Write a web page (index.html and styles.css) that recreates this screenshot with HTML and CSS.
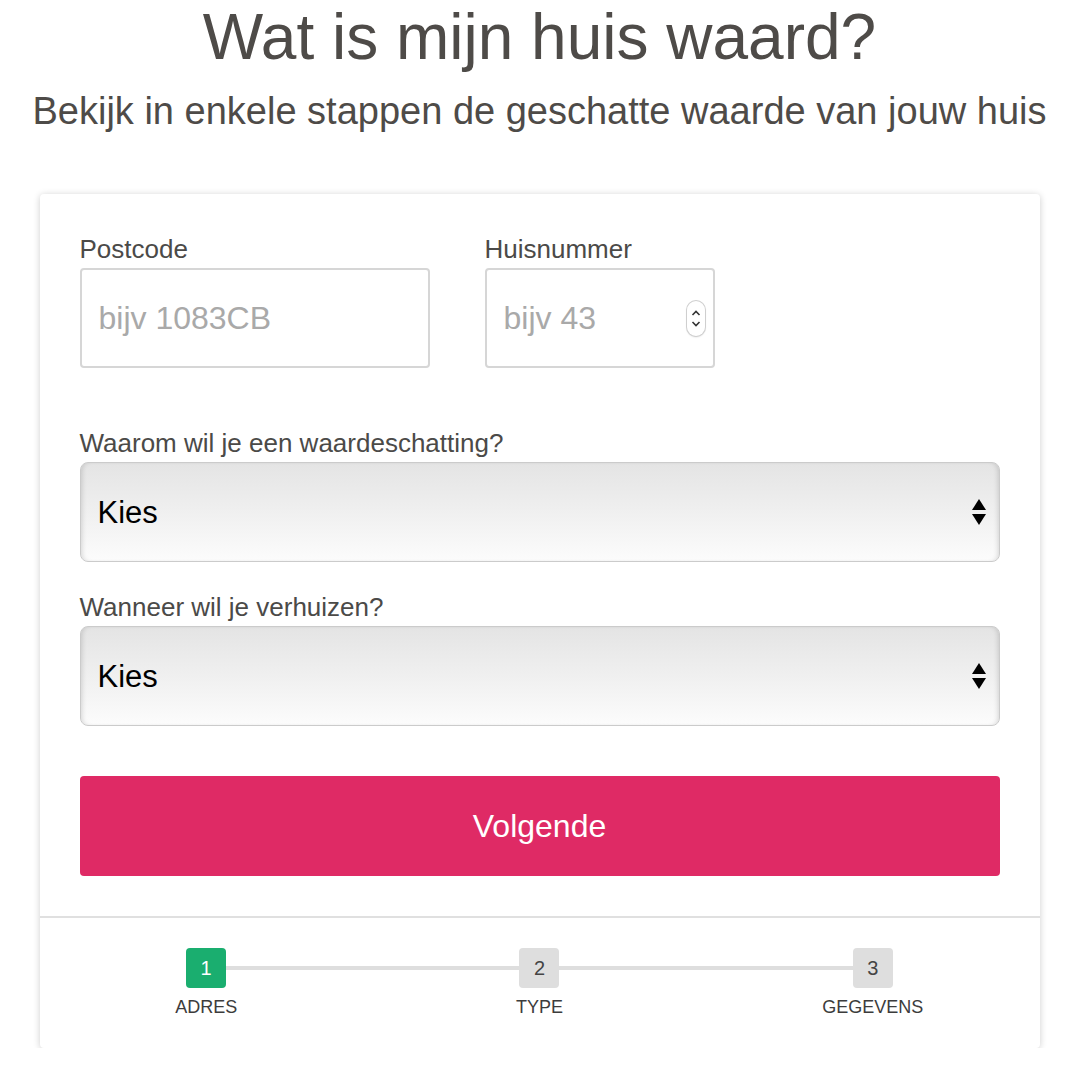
FILE: index.html
```html
<!DOCTYPE html>
<html lang="nl">
<head>
    <meta charset="UTF-8">
    <meta name="viewport" content="width=device-width, initial-scale=1.0">
    <title>Wat is mijn huis waard?</title>
    <link rel="stylesheet" href="styles.css">
</head>
<body>
    <div class="page">
        <h1>Wat is mijn huis waard?</h1>
        <p class="intro">Bekijk in enkele stappen de geschatte waarde van jouw huis</p>

        <div class="card">
            <form class="card-body" id="addressForm">
                <!-- adres -->
                <div class="row">
                    <div class="field field-postcode">
                        <label for="postcode">Postcode</label>
                        <input type="text" id="postcode" name="postcode" placeholder="bijv 1083CB">
                    </div>
                    <div class="field field-number">
                        <label for="huisnummer">Huisnummer</label>
                        <div class="number-wrap">
                            <input type="text" inputmode="numeric" id="huisnummer" name="huisnummer" placeholder="bijv 43">
                            <span class="spinner">
                                <svg width="18" height="35" viewBox="0 0 18 35">
                                    <path d="M5.5 14 L9 10.5 L12.5 14" fill="none" stroke="#333" stroke-width="1.6"/>
                                    <path d="M5.5 21 L9 24.5 L12.5 21" fill="none" stroke="#333" stroke-width="1.6"/>
                                </svg>
                            </span>
                        </div>
                    </div>
                </div>

                <!-- vragen -->
                <div class="field">
                    <label for="reason">Waarom wil je een waardeschatting?</label>
                    <div class="select-wrap">
                        <select id="reason" name="reason">
                            <option>Kies</option>
                            <option>Ik wil verkopen</option>
                            <option>Ik ben nieuwsgierig</option>
                        </select>
                        <svg class="select-arrows" width="14" height="26" viewBox="0 0 14 26">
                            <path d="M7 0 L14 11 L0 11 Z" fill="#000"/>
                            <path d="M0 15 L14 15 L7 26 Z" fill="#000"/>
                        </svg>
                    </div>
                </div>

                <div class="field">
                    <label for="moving">Wanneer wil je verhuizen?</label>
                    <div class="select-wrap">
                        <select id="moving" name="moving">
                            <option>Kies</option>
                            <option>Binnen 3 maanden</option>
                            <option>Binnen een jaar</option>
                        </select>
                        <svg class="select-arrows" width="14" height="26" viewBox="0 0 14 26">
                            <path d="M7 0 L14 11 L0 11 Z" fill="#000"/>
                            <path d="M0 15 L14 15 L7 26 Z" fill="#000"/>
                        </svg>
                    </div>
                </div>

                <button type="button" class="btn-next">Volgende</button>
            </form>

            <!-- stappen -->
            <ol class="steps">
                <li class="step active"><span class="step-num">1</span><span class="step-label">Adres</span></li>
                <li class="step"><span class="step-num">2</span><span class="step-label">Type</span></li>
                <li class="step"><span class="step-num">3</span><span class="step-label">Gegevens</span></li>
            </ol>
        </div>
    </div>
</body>
</html>
```

FILE: styles.css
```css
body {
    margin: 0;
    font-family: "Liberation Sans", Arial, sans-serif;
    color: #4b4a48;
    background: #fff;
}
.page {
    width: 1000px;
    margin: 0 auto;
    padding-left: 1px;
}
h1 {
    margin: 0;
    font-size: 64px;
    font-weight: normal;
    line-height: 74px;
    text-align: center;
    color: #4e4b48;
}
.intro {
    margin: 15px -40px 0;
    font-size: 38px;
    line-height: 44px;
    text-align: center;
    color: #4e4b48;
}
.card {
    margin-top: 61px;
    background: #fff;
    border-radius: 4px;
    box-shadow: 0 1px 7px rgba(0, 0, 0, 0.2);
}
.card-body {
    padding: 40px 40px 40px;
    border-bottom: 2px solid #e0e0e0;
}
.row {
    display: flex;
    gap: 55px;
    margin-bottom: 60px;
}
.field {
    margin-bottom: 30px;
}
.row .field {
    margin-bottom: 0;
}
label {
    display: block;
    font-size: 26px;
    line-height: 30px;
    margin-bottom: 4px;
    color: #4b4a48;
}
input {
    display: block;
    box-sizing: border-box;
    height: 100px;
    padding: 0 17px;
    border: 2px solid #d6d6d6;
    border-radius: 4px;
    font-family: "Liberation Sans", Arial, sans-serif;
    font-size: 32px;
    color: #333;
    outline: none;
}
input::placeholder {
    color: #a9a9a9;
}
.field-postcode input {
    width: 350px;
}
.number-wrap {
    position: relative;
    width: 230px;
}
.field-number input {
    width: 230px;
}
.spinner {
    position: absolute;
    left: 202px;
    top: 33px;
    width: 18px;
    height: 35px;
    border-radius: 9px;
    background: #fff;
    box-shadow: 0 0 0 1px #cfcfcf, 0 1px 2px rgba(0, 0, 0, 0.2);
}
.spinner svg {
    display: block;
}
.select-wrap {
    position: relative;
}
select {
    display: block;
    width: 100%;
    height: 100px;
    padding: 0 17px;
    -webkit-appearance: none;
    appearance: none;
    border: 1px solid #cbcbcb;
    border-radius: 8px;
    background: linear-gradient(#e4e4e4, #f2f2f2 60%, #fcfcfc);
    box-shadow: inset 4px 0 5px -3px rgba(0, 0, 0, 0.15), inset -4px 0 5px -3px rgba(0, 0, 0, 0.15);
    font-family: "Liberation Sans", Arial, sans-serif;
    font-size: 31px;
    color: #000;
    outline: none;
}
.select-arrows {
    position: absolute;
    right: 14px;
    top: 37px;
    pointer-events: none;
}
.btn-next {
    display: block;
    width: 100%;
    height: 100px;
    margin-top: 50px;
    border: none;
    border-radius: 4px;
    background: #df2a65;
    color: #fff;
    font-family: "Liberation Sans", Arial, sans-serif;
    font-size: 32px;
    cursor: pointer;
}
.steps {
    display: flex;
    margin: 0;
    padding: 30px 0 30px;
    list-style: none;
}
.step {
    position: relative;
    flex: 1;
    display: flex;
    flex-direction: column;
    align-items: center;
}
.step:not(:last-child)::after {
    content: "";
    position: absolute;
    left: 50%;
    top: 18px;
    width: 100%;
    height: 4px;
    background: #dedede;
}
.step-num {
    position: relative;
    z-index: 1;
    width: 40px;
    height: 40px;
    border-radius: 4px;
    background: #dedede;
    color: #444;
    font-size: 20px;
    line-height: 40px;
    text-align: center;
}
.step.active .step-num {
    background: #1aae6f;
    color: #fff;
}
.step-label {
    margin-top: 8px;
    font-size: 18px;
    line-height: 22px;
    text-transform: uppercase;
    color: #3c3c3c;
}
```
